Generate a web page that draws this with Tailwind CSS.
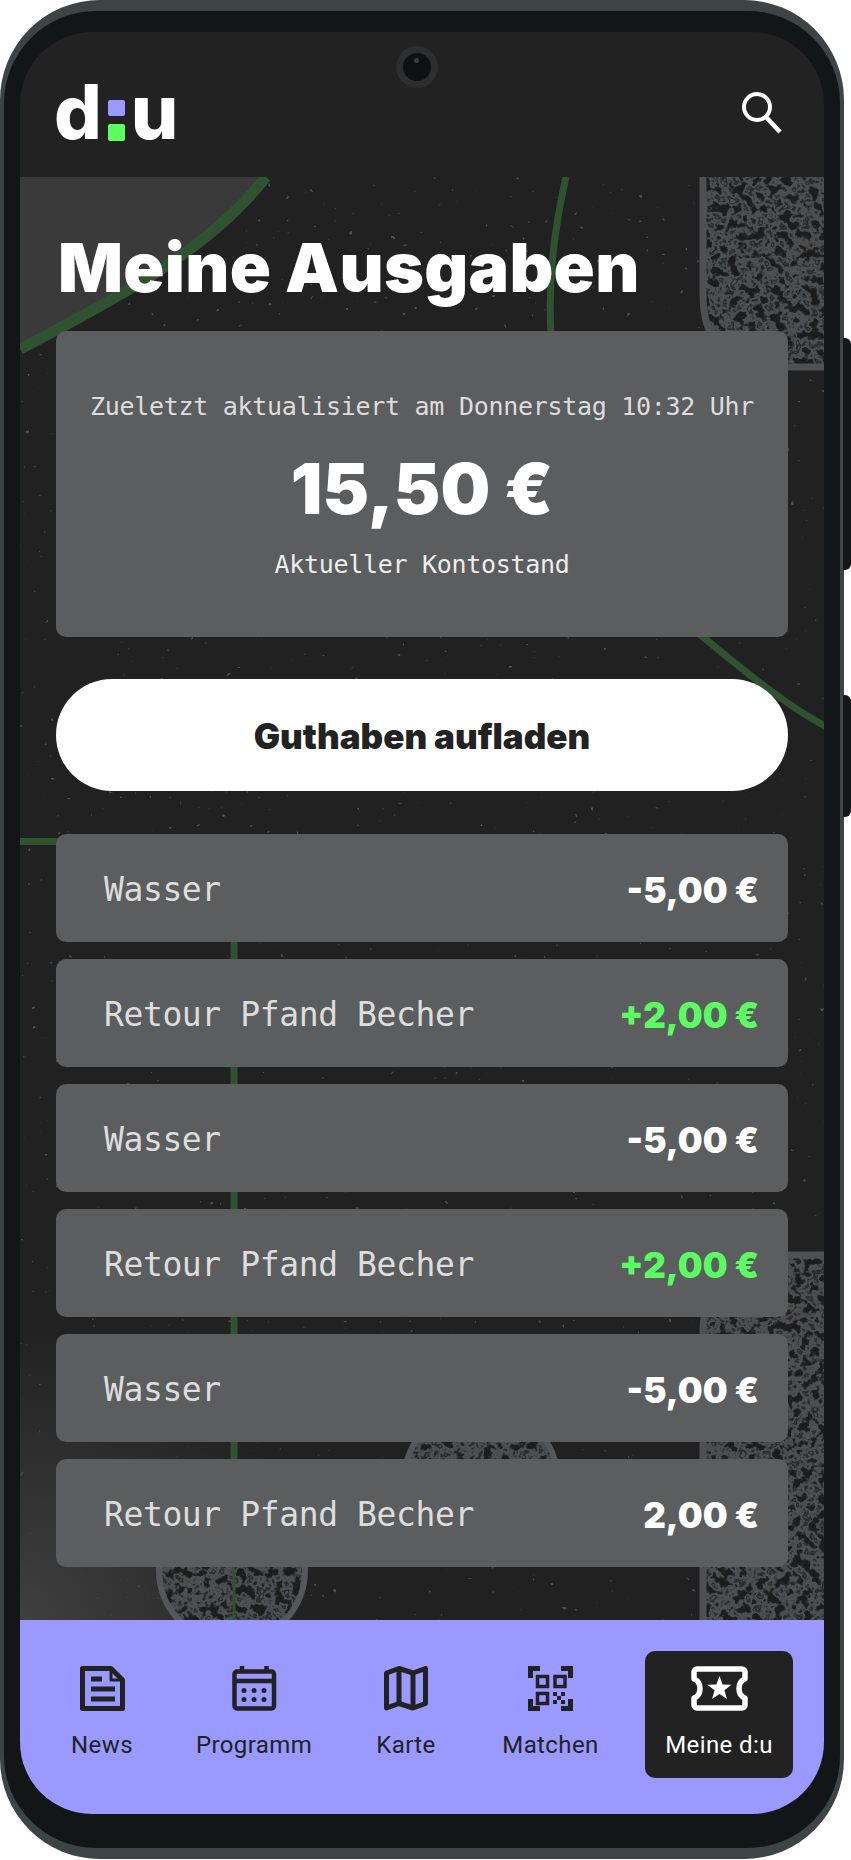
<!DOCTYPE html>
<html lang="de">
<head>
  <meta charset="UTF-8" />
  <title>Meine Ausgaben</title>
  <meta name="viewport" content="width=device-width, initial-scale=1.0" />
  <script src="https://cdn.jsdelivr.net/npm/@tailwindcss/browser@4"></script>
</head>
<body class="bg-white w-[851px] h-[1860px] overflow-hidden font-['Inter',sans-serif]">

  <!-- Phone frame -->
  <div class="relative w-[844px] h-[1859px] rounded-[100px] bg-[#3d4445] pt-[11px] px-1">
    <div class="absolute left-[843px] top-[338px] w-2 h-[232px] rounded-r-md bg-[#131718]"></div>
    <div class="absolute left-[843px] top-[695px] w-2 h-[122px] rounded-r-md bg-[#131718]"></div>

    <div class="w-[836px] h-[1837px] rounded-[92px] bg-[#121617] pt-[21px] px-4">
      <div class="relative w-[804px] h-[1782px] rounded-[72px] overflow-hidden flex flex-col bg-[#222222]">

        <!-- Camera -->
        <div class="absolute left-[376px] top-[14px] w-[42px] h-[42px] rounded-full bg-[#2e2e2e] flex items-center justify-center">
          <div class="relative w-7 h-7 rounded-full bg-[#0f1112]">
            <div class="absolute left-[11px] top-[5px] w-[5px] h-[5px] rounded-full bg-[#3a3c3e]"></div>
          </div>
        </div>

        <!-- Header -->
        <header class="h-[145px] shrink-0 flex items-start justify-between pl-[34px] pr-[42px]">
          <div class="flex items-end h-[58px] mt-[51px] text-white font-extrabold text-[75px] leading-[58px]">
            <span>d</span>
            <span class="flex flex-col gap-2 mx-[6px]">
              <span class="block w-[17px] h-4 rounded-[2px] bg-[#9999ff]"></span>
              <span class="block w-[17px] h-[17px] rounded-[2px] bg-[#5dff5d]"></span>
            </span>
            <span>u</span>
          </div>
          <svg class="mt-[60px]" width="42" height="42" viewBox="0 0 42 42" fill="none" stroke="#ffffff" stroke-width="4">
            <circle cx="17" cy="15" r="13" />
            <path d="M26 25l14 15" stroke-width="4.5" />
          </svg>
        </header>

        <!-- Main -->
        <main class="relative h-[1443px] shrink-0 px-9 overflow-hidden">
          <svg class="absolute left-0 top-0" width="804" height="1443" viewBox="0 0 804 1443" fill="none">
            <defs>
              <filter id="web" x="0" y="0" width="100%" height="100%" color-interpolation-filters="sRGB">
                <feTurbulence type="fractalNoise" baseFrequency="0.11" numOctaves="3" seed="7" />
                <feColorMatrix values="0 0 0 0 0.3  0 0 0 0 0.31  0 0 0 0 0.32  1 0 0 0 0" />
                <feComponentTransfer>
                  <feFuncA type="table" tableValues="0 0 0 0 0.1 1 1 0.2 1 1 1" />
                </feComponentTransfer>
              </filter>
              <filter id="dust" x="0" y="0" width="100%" height="100%" color-interpolation-filters="sRGB">
                <feTurbulence type="fractalNoise" baseFrequency="0.17" numOctaves="2" seed="11" />
                <feColorMatrix values="0 0 0 0 0.38  0 0 0 0 0.38  0 0 0 0 0.39  16 0 0 0 -12.5" />
              </filter>
              <radialGradient id="fadeLeft" gradientUnits="userSpaceOnUse" cx="0" cy="1443" r="300">
                <stop offset="0" stop-color="#3f3f3f" />
                <stop offset="1" stop-color="#3f3f3f" stop-opacity="0" />
              </radialGradient>
              <clipPath id="blobTop"><path d="M683 -10V118Q683 190 760 190H810V-10Z" /></clipPath>
              <clipPath id="blobBottom"><path d="M680 1450V1155Q680 1075 770 1075H810V1450Z" /></clipPath>
              <clipPath id="circA"><circle cx="212" cy="1393" r="73" /></clipPath>
              <clipPath id="circB"><circle cx="461" cy="1305" r="77" /></clipPath>
            </defs>

            <rect width="804" height="1443" fill="#212121" />
            <rect width="804" height="1443" filter="url(#dust)" opacity="0.7" />

            <!-- corner shades -->
            <path d="M0 0H246C195 65 120 110 0 172Z" fill="#3a3a3a" />
            <rect x="0" y="1100" width="320" height="343" fill="url(#fadeLeft)" />

            <!-- textured blobs -->
            <path d="M683 -10V118Q683 190 760 190H810V-10Z" fill="#1c1c1c" />
            <path d="M680 1450V1155Q680 1075 770 1075H810V1450Z" fill="#1c1c1c" />
            <circle cx="212" cy="1393" r="73" fill="#1c1c1c" />
            <circle cx="461" cy="1305" r="77" fill="#1c1c1c" />
            <rect width="804" height="1443" filter="url(#web)" clip-path="url(#blobTop)" />
            <rect width="804" height="1443" filter="url(#web)" clip-path="url(#blobBottom)" />
            <rect width="804" height="1443" filter="url(#web)" clip-path="url(#circA)" />
            <rect width="804" height="1443" filter="url(#web)" clip-path="url(#circB)" />
            <path d="M683 -10V118Q683 190 760 190H810" stroke="#4e5052" stroke-width="7" />
            <path d="M683 1450V1155Q683 1078 770 1078H810" stroke="#4e5052" stroke-width="7" />
            <circle cx="212" cy="1393" r="73" stroke="#55575a" stroke-width="6" />
            <circle cx="461" cy="1305" r="77" stroke="#55575a" stroke-width="6" />

            <!-- green lines -->
            <path d="M246 0C195 65 120 110 0 172" stroke="#2f5230" stroke-width="11" />
            <path d="M546 0C530 70 526 130 534 190C550 320 620 420 683 460C720 490 760 525 810 552" stroke="#2f5230" stroke-width="7" />
            <path d="M0 664.500H214V1380" stroke="#2f5230" stroke-width="7" />
            <path d="M214 1380V1443" stroke="#2f5230" stroke-width="3" />
          </svg>

          <h1 class="relative h-[154px] pt-[48px] pl-[2px] text-white font-black text-[68px] leading-[85px] tracking-[0.3px] whitespace-nowrap">Meine Ausgaben</h1>

          <!-- Balance card -->
          <section class="relative h-[306px] rounded-[10px] bg-[#5c5d5f] flex flex-col items-center text-white">
            <p class="mt-[60px] h-8 leading-8 font-['DejaVu_Sans_Mono',monospace] text-[25px] tracking-[-0.3px] text-[#dddddd] whitespace-nowrap">Zueletzt aktualisiert am Donnerstag 10:32 Uhr</p>
            <p class="mt-[21px] h-[90px] leading-[90px] font-black text-[70px]">15,50 €</p>
            <p class="mt-[13px] h-9 leading-9 font-['DejaVu_Sans_Mono',monospace] text-[25px] tracking-[-0.3px] text-[#eeeeee] whitespace-nowrap">Aktueller Kontostand</p>
          </section>

          <button class="relative block w-full h-28 mt-[42px] pt-[2px] rounded-full bg-white text-[#222222] font-black text-[35px]">Guthaben aufladen</button>

          <!-- Transactions -->
          <ul class="relative mt-[43px] flex flex-col gap-[17px]">
            <li class="h-[108px] rounded-[10px] bg-[#5c5d5f] flex items-center justify-between pl-12 pr-[29px]">
              <span class="pt-1 font-['DejaVu_Sans_Mono',monospace] text-[33px] tracking-[-0.4px] text-[#dddddd]">Wasser</span>
              <span class="pt-1 font-black text-[35px] text-white">-5,00 €</span>
            </li>
            <li class="h-[108px] rounded-[10px] bg-[#5c5d5f] flex items-center justify-between pl-12 pr-[29px]">
              <span class="pt-1 font-['DejaVu_Sans_Mono',monospace] text-[33px] tracking-[-0.4px] text-[#dddddd]">Retour Pfand Becher</span>
              <span class="pt-1 font-black text-[35px] text-[#5bfb62]">+2,00 €</span>
            </li>
            <li class="h-[108px] rounded-[10px] bg-[#5c5d5f] flex items-center justify-between pl-12 pr-[29px]">
              <span class="pt-1 font-['DejaVu_Sans_Mono',monospace] text-[33px] tracking-[-0.4px] text-[#dddddd]">Wasser</span>
              <span class="pt-1 font-black text-[35px] text-white">-5,00 €</span>
            </li>
            <li class="h-[108px] rounded-[10px] bg-[#5c5d5f] flex items-center justify-between pl-12 pr-[29px]">
              <span class="pt-1 font-['DejaVu_Sans_Mono',monospace] text-[33px] tracking-[-0.4px] text-[#dddddd]">Retour Pfand Becher</span>
              <span class="pt-1 font-black text-[35px] text-[#5bfb62]">+2,00 €</span>
            </li>
            <li class="h-[108px] rounded-[10px] bg-[#5c5d5f] flex items-center justify-between pl-12 pr-[29px]">
              <span class="pt-1 font-['DejaVu_Sans_Mono',monospace] text-[33px] tracking-[-0.4px] text-[#dddddd]">Wasser</span>
              <span class="pt-1 font-black text-[35px] text-white">-5,00 €</span>
            </li>
            <li class="h-[108px] rounded-[10px] bg-[#5c5d5f] flex items-center justify-between pl-12 pr-[29px]">
              <span class="pt-1 font-['DejaVu_Sans_Mono',monospace] text-[33px] tracking-[-0.4px] text-[#dddddd]">Retour Pfand Becher</span>
              <span class="pt-1 font-black text-[35px] text-white">2,00 €</span>
            </li>
          </ul>
        </main>

        <!-- Bottom nav -->
        <nav class="h-[194px] shrink-0 bg-[#9999ff] flex items-start justify-between pl-8 pr-[31px] pt-[31px] font-['Roboto',sans-serif] text-[24px] tracking-[0.4px] text-[#222222]">
          <a class="w-[100px] h-[127px] pt-[15px] flex flex-col items-center">
            <svg width="45" height="45" viewBox="0 0 45 45" fill="none" stroke="#222222" stroke-width="5" stroke-linejoin="round">
              <path d="M2.500 2.500H31L42.500 14V42.500H2.500Z" />
              <path d="M31 2.500V14H42.500" stroke-width="3" />
              <path d="M11 13H22M11 23H35M11 33H35" />
            </svg>
            <span class="mt-[18px] leading-8 whitespace-nowrap">News</span>
          </a>
          <a class="w-[153px] h-[127px] pt-[15px] flex flex-col items-center">
            <svg width="45" height="45" viewBox="0 0 45 45" fill="none" stroke="#222222" stroke-width="4.500" stroke-linejoin="round">
              <rect x="2.500" y="5.500" width="39.500" height="37" rx="2.500" />
              <path d="M2.500 15H42M10 0V6M34.500 0V6" />
              <g fill="#222222" stroke="none">
                <circle cx="12" cy="24.500" r="2.500" />
                <circle cx="22" cy="24.500" r="2.500" />
                <circle cx="32" cy="24.500" r="2.500" />
                <circle cx="12" cy="33.500" r="2.500" />
                <circle cx="22" cy="33.500" r="2.500" />
                <circle cx="32" cy="33.500" r="2.500" />
              </g>
            </svg>
            <span class="mt-[18px] leading-8 whitespace-nowrap">Programm</span>
          </a>
          <a class="w-[100px] h-[127px] pt-[15px] flex flex-col items-center">
            <svg width="45" height="45" viewBox="0 0 45 45" fill="none" stroke="#222222" stroke-width="5" stroke-linejoin="round">
              <path d="M2.500 7L15 2.500L29 7L41.500 2.500V37.500L29 42L15 37.500L2.500 42Z" />
              <path d="M15 3V37M29 7V41" />
            </svg>
            <span class="mt-[18px] leading-8 whitespace-nowrap">Karte</span>
          </a>
          <a class="w-[138px] h-[127px] pt-[15px] flex flex-col items-center">
            <svg width="45" height="45" viewBox="0 0 45 45" fill="none" stroke="#222222" stroke-width="5">
              <path d="M12 2.500H2.500V12M33 2.500H42.500V12M12 42.500H2.500V33M33 42.500H42.500V33" />
              <g stroke-width="3.500">
                <rect x="9.500" y="10.500" width="10" height="10" />
                <rect x="27" y="10.500" width="10" height="10" />
                <rect x="9.500" y="27.500" width="10" height="10" />
              </g>
              <path fill="#222222" stroke="none" d="M25 26h4v4h-4zM33 26h4v4h-4zM29 30h4v4h-4zM25 34h4v4h-4zM33 34h4v4h-4z" />
            </svg>
            <span class="mt-[18px] leading-8 whitespace-nowrap">Matchen</span>
          </a>
          <a class="w-[148px] h-[127px] pt-[15px] flex flex-col items-center rounded-[10px] bg-[#222222] text-white">
            <svg width="57" height="45" viewBox="0 0 57 45" fill="none" stroke="#ffffff" stroke-width="5.500" stroke-linejoin="round">
              <path d="M6 3H51A3 3 0 0 1 54 6V13C46 16 46 29 54 32V39A3 3 0 0 1 51 42H6A3 3 0 0 1 3 39V32C11 29 11 16 3 13V6A3 3 0 0 1 6 3Z" />
              <path fill="#ffffff" stroke="none" d="M28.500 10L31.600 18.500L40.600 18.800L33.400 24.300L36 33L28.500 27.900L21 33L23.600 24.300L16.400 18.800L25.400 18.500Z" />
            </svg>
            <span class="mt-[18px] leading-8 whitespace-nowrap">Meine d:u</span>
          </a>
        </nav>
      </div>
    </div>
  </div>
</body>
</html>
